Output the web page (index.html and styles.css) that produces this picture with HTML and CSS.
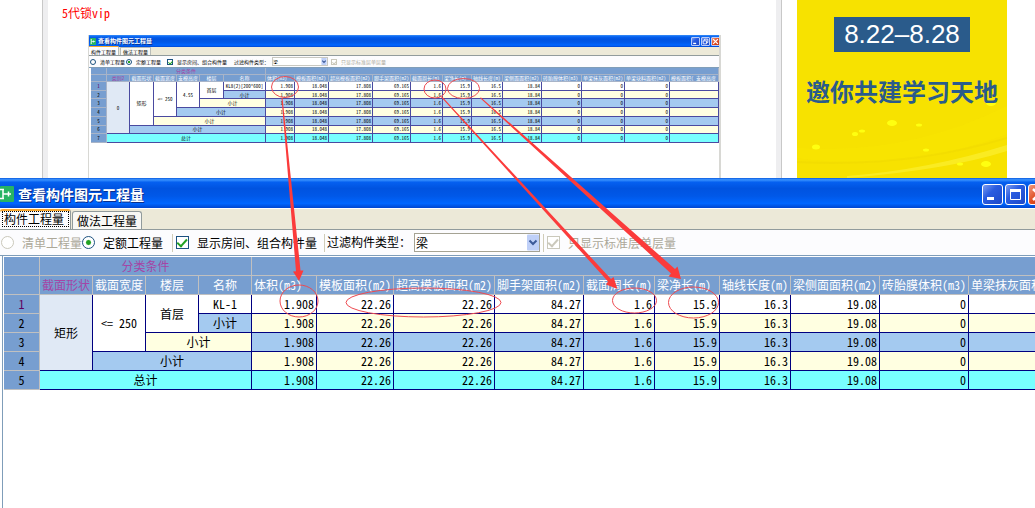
FILE: index.html
```html
<!DOCTYPE html>
<html lang="zh-CN">
<head>
<meta charset="utf-8">
<title>查看构件图元工程量</title>
<link rel="stylesheet" href="styles.css">
</head>
<body>
<div class="post">
  <div class="post-edge post-edge-left"></div>
  <main class="post-body">
    <p class="post-note">5代锁vip</p>
    <section class="win mini">
      <header class="titlebar">
        <svg class="app-icon" viewBox="0 0 14 16"><rect width="14" height="16" rx="1" fill="#27b463"/><path d="M3 3v10M3 8h9M8 5.500v5M1.500 4h3M1.500 12h3" stroke="#fff" stroke-width="1.600" fill="none"/></svg>
        <h2 class="title">查看构件图元工程量</h2>
        <button class="winbtn" aria-label="最小化"><svg viewBox="0 0 21 21"><path d="M5 15h7" stroke="#fff" stroke-width="3"/></svg></button>
        <button class="winbtn" aria-label="还原"><svg viewBox="0 0 21 21"><path d="M8 8V5h8v8h-3M5 9h8v7H5z" stroke="#fff" stroke-width="2" fill="none"/></svg></button>
        <button class="winbtn close" aria-label="关闭"><svg viewBox="0 0 21 21"><path d="M5 5l11 11M16 5L5 16" stroke="#fff" stroke-width="3"/></svg></button>
      </header>
      <nav class="tabs"><button class="tab active">构件工程量</button><button class="tab">做法工程量</button></nav>
      <div class="toolbar">
        <label class="opt opt-a"><input type="radio" name="m1">清单工程量</label>
        <label class="opt opt-b"><input type="radio" name="m1" checked>定额工程量</label>
        <label class="opt opt-c"><input type="checkbox" checked>显示房间、组合构件量</label>
        <label class="opt-label" for="type1">过滤构件类型：</label>
        <span class="pick"><select id="type1"><option>梁</option></select><svg class="arrow" viewBox="0 0 12 16"><rect width="12" height="16" rx="1" fill="#bfd0f8"/><path d="M2 6l4 4 4-4" stroke="#3c5a99" stroke-width="2.500" fill="none"/></svg></span>
        <label class="opt opt-d off"><input type="checkbox" checked disabled>只显示标准层单层量</label>
      </div>
      <div class="sheet">
        <table class="grid">
          <colgroup><col class="n16"><col class="n23"><col class="n24"><col class="n23"><col class="n23"><col class="n24"><col class="n42"><col class="n29"><col class="n34"><col class="n44"><col class="n38"><col class="n32"><col class="n29"><col class="n31"><col class="n39"><col class="n40"><col class="n43"><col class="n45"><col class="n49"></colgroup>
          <thead>
            <tr><th></th><th colspan="6" class="mid key">分类条件</th><th colspan="12"></th></tr>
            <tr><th></th><th class="mid key">类别2</th><th class="mid">截面形状</th><th class="mid">截面宽度</th><th class="mid">支模高度</th><th class="mid">楼层</th><th class="mid">名称</th><th>体积(m3)</th><th>模板面积(m2)</th><th>超高模板面积(m2)</th><th>脚手架面积(m2)</th><th>截面周长(m)</th><th>梁净长(m)</th><th>轴线长度(m)</th><th>梁侧面面积(m2)</th><th>砖胎膜体积(m3)</th><th>单梁抹灰面积(m2)</th><th>单梁块料面积(m2)</th><th>模板面积( 支模高度</th></tr>
          </thead>
          <tbody>
            <tr><th class="cur">1</th><td rowspan="6" class="mid pale">0</td><td rowspan="5" class="mid">矩形</td><td rowspan="4" class="mid">&lt;= 250</td><td rowspan="3" class="mid">4.55</td><td rowspan="2" class="mid">首层</td><td class="mid">KL8(2)[200*600]</td><td>1.908</td><td>18.048</td><td>17.808</td><td>69.165</td><td>1.6</td><td>15.9</td><td>16.5</td><td>18.84</td><td>0</td><td>0</td><td>0</td><td></td></tr>
            <tr class="cream"><th>2</th><td class="mid blue">小计</td><td>1.908</td><td>18.048</td><td>17.808</td><td>69.165</td><td>1.6</td><td>15.9</td><td>16.5</td><td>18.84</td><td>0</td><td>0</td><td>0</td><td></td></tr>
            <tr class="sky"><th>3</th><td colspan="2" class="mid ivory">小计</td><td>1.908</td><td>18.048</td><td>17.808</td><td>69.165</td><td>1.6</td><td>15.9</td><td>16.5</td><td>18.84</td><td>0</td><td>0</td><td>0</td><td></td></tr>
            <tr class="cream"><th>4</th><td colspan="3" class="mid blue">小计</td><td>1.908</td><td>18.048</td><td>17.808</td><td>69.165</td><td>1.6</td><td>15.9</td><td>16.5</td><td>18.84</td><td>0</td><td>0</td><td>0</td><td></td></tr>
            <tr class="sky"><th>5</th><td colspan="4" class="mid ivory">小计</td><td>1.908</td><td>18.048</td><td>17.808</td><td>69.165</td><td>1.6</td><td>15.9</td><td>16.5</td><td>18.84</td><td>0</td><td>0</td><td>0</td><td></td></tr>
            <tr class="cream"><th>6</th><td colspan="5" class="mid blue">小计</td><td>1.908</td><td>18.048</td><td>17.808</td><td>69.165</td><td>1.6</td><td>15.9</td><td>16.5</td><td>18.84</td><td>0</td><td>0</td><td>0</td><td></td></tr>
            <tr class="total"><th>7</th><td colspan="6" class="mid">总计</td><td>1.908</td><td>18.048</td><td>17.808</td><td>69.165</td><td>1.6</td><td>15.9</td><td>16.5</td><td>18.84</td><td>0</td><td>0</td><td>0</td><td></td></tr>
          </tbody>
        </table>
      </div>
    </section>
  </main>
  <div class="post-edge post-edge-right"></div>
  <aside class="banner">
    <svg class="banner-art" viewBox="0 0 210 178">
      <path d="M0 158Q110 172 210 134V106Q110 156 0 148Z" fill="#f9e800" opacity=".4"/>
      <path d="M50 178Q150 170 210 151V145Q130 170 50 176Z" fill="#fbf030" opacity=".7"/>
      <path d="M0 162Q110 168 210 138" stroke="#eed800" fill="none" stroke-width="2" opacity=".4"/>
      <g fill="#ffff10"><ellipse cx="95" cy="123" rx="5" ry="3"/><ellipse cx="122" cy="125" rx="3" ry="1.500"/><ellipse cx="58" cy="134" rx="3" ry="2"/><ellipse cx="65" cy="131" rx="3" ry="1.500"/><ellipse cx="19" cy="147" rx="4" ry="2.500"/><ellipse cx="129" cy="150" rx="3" ry="1.500"/><ellipse cx="163" cy="164" rx="3" ry="1.500"/><ellipse cx="189" cy="164" rx="5" ry="3"/><ellipse cx="194" cy="103" rx="5" ry="3"/></g>
    </svg>
    <p class="banner-date">8.22–8.28</p>
    <p class="banner-text">邀你共建学习天地</p>
  </aside>
</div>

<section class="win full">
  <header class="titlebar">
    <svg class="app-icon" viewBox="0 0 14 16"><rect width="14" height="16" rx="1" fill="#27b463"/><path d="M3 3.500v9M3 8h8M8.500 5.500v5M0 3.500h4M0 12.500h4" stroke="#fff" stroke-width="1.500" fill="none"/></svg>
    <h1 class="title">查看构件图元工程量</h1>
    <button class="winbtn" aria-label="最小化"><svg viewBox="0 0 21 21"><path d="M5 14.500h7" stroke="#fff" stroke-width="3"/></svg></button>
    <button class="winbtn" aria-label="最大化"><svg viewBox="0 0 21 21"><path d="M5.500 6v9.500h10V6M5 6.500h11" stroke="#fff" fill="none"/><path d="M5 6.500h11" stroke="#fff" stroke-width="3"/></svg></button>
    <button class="winbtn close" aria-label="关闭"><svg viewBox="0 0 21 21"><path d="M5 5l11 11M16 5L5 16" stroke="#fff" stroke-width="2.500"/></svg></button>
  </header>
  <nav class="tabs"><button class="tab active">构件工程量</button><button class="tab">做法工程量</button></nav>
  <div class="toolbar">
    <label class="opt opt-a off"><input type="radio" name="m2" disabled>清单工程量</label>
    <label class="opt opt-b"><input type="radio" name="m2" checked>定额工程量</label>
    <label class="opt opt-c"><input type="checkbox" checked>显示房间、组合构件量</label>
    <label class="opt-label" for="type2">过滤构件类型：</label>
    <span class="pick"><select id="type2"><option>梁</option></select><svg class="arrow" viewBox="0 0 12 16"><rect width="12" height="16" rx="1" fill="#bfd0f8"/><path d="M2.500 6L6 9.500 9.500 6" stroke="#3c5a99" stroke-width="2" fill="none"/></svg></span>
    <label class="opt opt-d off"><input type="checkbox" checked disabled>只显示标准层单层量</label>
  </div>
  <div class="sheet">
    <table class="grid">
      <colgroup><col class="w36"><col class="w53"><col class="w53"><col class="w53"><col class="w53"><col class="w65"><col class="w77"><col class="w101"><col class="w89"><col class="w71"><col class="w65"><col class="w71"><col class="w89"><col class="w89"><col class="w101"></colgroup>
      <thead>
        <tr><th></th><th colspan="4" class="mid key">分类条件</th><th colspan="10"></th></tr>
        <tr><th></th><th class="mid key">截面形状</th><th class="mid">截面宽度</th><th class="mid">楼层</th><th class="mid">名称</th><th>体积(m3)</th><th>模板面积(m2)</th><th>超高模板面积(m2)</th><th>脚手架面积(m2)</th><th>截面周长(m)</th><th>梁净长(m)</th><th>轴线长度(m)</th><th>梁侧面面积(m2)</th><th>砖胎膜体积(m3)</th><th>单梁抹灰面积</th></tr>
      </thead>
      <tbody>
        <tr><th class="cur">1</th><td rowspan="4" class="mid pale">矩形</td><td rowspan="3" class="mid">&lt;= 250</td><td rowspan="2" class="mid">首层</td><td class="mid">KL-1</td><td>1.908</td><td>22.26</td><td>22.26</td><td>84.27</td><td>1.6</td><td>15.9</td><td>16.3</td><td>19.08</td><td>0</td><td></td></tr>
        <tr class="cream"><th>2</th><td class="mid blue">小计</td><td>1.908</td><td>22.26</td><td>22.26</td><td>84.27</td><td>1.6</td><td>15.9</td><td>16.3</td><td>19.08</td><td>0</td><td></td></tr>
        <tr class="sky"><th>3</th><td colspan="2" class="mid ivory">小计</td><td>1.908</td><td>22.26</td><td>22.26</td><td>84.27</td><td>1.6</td><td>15.9</td><td>16.3</td><td>19.08</td><td>0</td><td></td></tr>
        <tr class="cream"><th>4</th><td colspan="3" class="mid blue">小计</td><td>1.908</td><td>22.26</td><td>22.26</td><td>84.27</td><td>1.6</td><td>15.9</td><td>16.3</td><td>19.08</td><td>0</td><td></td></tr>
        <tr class="total"><th>5</th><td colspan="4" class="mid">总计</td><td>1.908</td><td>22.26</td><td>22.26</td><td>84.27</td><td>1.6</td><td>15.9</td><td>16.3</td><td>19.08</td><td>0</td><td></td></tr>
      </tbody>
    </table>
  </div>
</section>

<svg class="marks" width="1035" height="508" viewBox="0 0 1035 508" aria-hidden="true">
  <g fill="none" stroke="#ee4a50">
    <ellipse cx="285" cy="87" rx="13.500" ry="10.500"/>
    <ellipse cx="435" cy="89" rx="11" ry="9"/>
    <ellipse cx="463.500" cy="88.500" rx="16" ry="10"/>
    <ellipse cx="299" cy="301" rx="19" ry="16"/>
    <ellipse cx="423.500" cy="302.500" rx="77.500" ry="14.500"/>
    <ellipse cx="634.500" cy="300.500" rx="22" ry="12.500"/>
    <ellipse cx="693.500" cy="302.500" rx="25" ry="15.500"/>
  </g>
  <g fill="#fb3b3b">
    <path d="M281.500 98L282.500 98L300.500 270.500L303.500 270.500L299 281L293 271.500L296 271.300Z"/>
    <path d="M441 97L442 96.500L611 279L613.500 277L617.500 289L606 284.500L608 281.500Z"/>
    <path d="M480 98L481 97.500L675 269L677.500 266.500L681 279L668.500 276.500L671 273.500Z"/>
  </g>
</svg>
</body>
</html>
```
FILE: styles.css
```css
* { box-sizing: border-box; }

body {
  margin: 0;
  min-height: 100vh;
  display: flex;
  flex-direction: column;
  position: relative;
  overflow: hidden;
  background: #fff;
  color: #000;
  font-family: "Noto Sans Mono CJK SC", "Noto Sans CJK SC", "Liberation Mono", monospace;
  font-size: 12px;
}

h1, h2, p { margin: 0; }
button, select, input { font: inherit; color: inherit; margin: 0; padding: 0; }

/* forum page behind the window */
.post { display: flex; height: 178px; overflow: hidden; }
.post-edge { flex: none; width: 6px; background: #eeeef0; }
.post-edge-left { margin-left: 42px; border-left: 1px solid #c8c8c8; }
.post-edge-right { border-right: 1px solid #c8c8c8; }
.post-body { flex: 1; min-width: 0; padding: 4px 55px 0 40px; }
.post-note { padding-left: 14px; height: 31px; line-height: 18px; color: #f00; margin-left: -40px; }

.banner {
  flex: none;
  width: 210px;
  margin: 0 28px 0 15px;
  padding-top: 17px;
  display: flex;
  flex-direction: column;
  align-items: center;
  position: relative;
  background: #f7e200;
  color: #2a5b8b;
}
.banner-art { position: absolute; inset: 0; }
.banner-date {
  position: relative;
  padding: 0 10px;
  margin-bottom: 21px;
  background: #2a5b8b;
  color: #fff;
  font: 26px/35px "Liberation Sans", Arial, sans-serif;
}
.banner-text {
  position: relative;
  font: bold 24px/36px "Noto Sans CJK SC", sans-serif;
  white-space: nowrap;
}

/* application window */
.win { background: #fff; overflow: hidden; }
.full { flex: 1; }
.titlebar {
  display: flex;
  align-items: center;
  gap: 2px;
  color: #fff;
  background: linear-gradient(#0a5be0 0, #3a93ff 6%, #0560f0 14%, #0053e0 35%, #0058e8 60%, #0066ff 85%, #0046d0 100%);
}
.full .titlebar { height: 31px; border-bottom: 1px solid #fff; margin-right: -14px; padding-top: 2px; }
.title { flex: 1; white-space: nowrap; text-shadow: 1px 1px #0a2f8c; font-family: "Noto Sans CJK SC", sans-serif; }
.full .title { font-size: 14px; line-height: 20px; padding-left: 2px; }
.app-icon { flex: none; width: 14px; height: 16px; }
.winbtn {
  width: 21px;
  height: 21px;
  border: 1px solid #fff;
  border-radius: 3px;
  background: linear-gradient(135deg, #7b9cf0, #2a5ce0 40%, #1c48c8);
}
.winbtn svg { display: block; width: 21px; height: 21px; margin: -1px; }
.winbtn.close { background: linear-gradient(135deg, #f09a80, #df4a20 50%, #c83a14); }

.tabs {
  display: flex;
  align-items: flex-end;
  gap: 1px;
  height: 21px;
  background: #ece9d8;
  border-bottom: 1px solid #919b9c;
}
.tab {
  height: 18px;
  padding: 0 4px;
  line-height: 16px;
  white-space: nowrap;
  background: #f8f8f4;
  border: 1px solid #919b9c;
  border-bottom: 0;
  border-radius: 3px 3px 0 0;
}
.tab.active {
  height: 20px;
  padding: 0 6px 3px 4px;
  border-left: 0;
  border-top: 2px solid #f8a932;
  background: #fcfcfe;
  outline: 1px dotted #000;
  outline-offset: -3px;
}

.toolbar {
  display: flex;
  align-items: center;
  height: 26px;
  background: #fcfcfe;
  border-bottom: 1px solid #7f9db9;
  white-space: nowrap;
}
.opt { display: flex; align-items: center; gap: 8px; }
.off { color: #aca899; }
.full .opt-a { padding-left: 1px; width: 82px; }
.full .opt-b { width: 90px; }
.full .opt-c { width: 152px; height: 18px; border-left: 1px solid #d0ccb8; padding-left: 3px; }
.full .opt-label { height: 18px; line-height: 16px; border-left: 1px solid #d0ccb8; padding-left: 2px; width: 90px; }
.full .opt-d { height: 18px; margin-left: 3px; border-left: 1px solid #d0ccb8; padding-left: 3px; }
.opt input {
  appearance: none;
  flex: none;
  width: 13px;
  height: 13px;
  border: 1px solid #1c5180;
  background: #fff;
}
.opt input[type="radio"] { border-radius: 50%; }
.opt input[type="radio"]:checked { background: radial-gradient(circle, #21a121 0 25%, #fff 40%); }
.opt input[type="checkbox"]:checked::after {
  content: "";
  display: block;
  width: 40%;
  height: 75%;
  margin: 0 auto;
  border: solid #21a121;
  border-width: 0 2px 2px 0;
  transform: rotate(42deg);
}
.opt.off input { border-color: #cac8bb; }
.opt.off input[type="checkbox"]:checked::after { border-color: #cac8bb; }

.pick { position: relative; display: flex; width: 126px; height: 19px; }
.pick select {
  appearance: none;
  width: 100%;
  padding: 0 0 2px 1px;
  border: 1px solid #a5a394;
  border-radius: 0;
  background: #fff;
}
.arrow { position: absolute; right: 1px; top: 1px; width: 12px; height: 17px; }

.sheet { background: #fff; }
.full .sheet { margin-left: 2px; border-left: 1px solid #7f9db9; padding: 1px 0 0 1px; min-height: 252px; }
.grid { table-layout: fixed; border-spacing: 0; width: 0; }
.grid th, .grid td {
  padding: 0 2px;
  border: solid #000080;
  border-width: 0 1px 1px 0;
  text-align: right;
  font-weight: normal;
  white-space: nowrap;
  overflow: hidden;
}
.full .grid th, .full .grid td { height: 19px; line-height: 18px; }
.grid th { background: #779ed0; border-color: #c0c0c0; }
.grid thead th { color: #fff; text-align: left; }
.grid tbody th { text-align: center; }
.grid .mid { text-align: center; padding: 0; }
.grid thead .key { color: #a545a5; }
.grid .cur { color: #600060; }
.cream td, .grid .ivory { background: #ffffe1; }
.sky td, .grid .blue { background: #a4caf0; }
.total td { background: #78ffff; }
.grid .pale { background: #e0e9f5; }

.w36 { width: 36px; }
.w53 { width: 53px; }
.w65 { width: 65px; }
.w71 { width: 71px; }
.w77 { width: 77px; }
.w89 { width: 89px; }
.w101 { width: 101px; }

/* reduced copy of the window inside the post */
.mini { width: 633px; height: 150px; font-size: 5px; border: solid #d8d8d4; border-width: 0 2px 0 1px; }
.mini .titlebar { height: 12px; gap: 1px; padding: 0 0 0 1px; margin-right: -1px; }
.mini .app-icon { width: 6px; height: 7px; }
.mini .title { font-size: 6px; line-height: 10px; padding-left: 1px; }
.mini .winbtn { width: 9px; height: 9px; border-radius: 1px; border-color: #b8ccf8; }
.mini .winbtn svg { width: 9px; height: 9px; }
.mini .tabs { height: 9px; }
.mini .tab { height: 8px; line-height: 7px; padding: 0 2px; border-radius: 1px 1px 0 0; border-color: #b8bcb8; }
.mini .tab.active { height: 9px; border-top: 1px solid #f8a932; padding: 0 2px; outline: 0; }
.mini .toolbar { height: 12px; }
.mini .opt { gap: 4px; }
.mini .opt input { width: 6px; height: 6px; }
.mini .opt input[type="checkbox"]:checked::after { border-width: 0 1px 1px 0; }
.mini .opt-a { width: 37px; padding-left: 1px; }
.mini .opt-b { width: 41px; }
.mini .opt-c { width: 67px; }
.mini .opt-label { width: 38px; }
.mini .pick { width: 56px; height: 9px; }
.mini .pick select { padding: 0 0 1px; border-color: #c8c8c0; }
.mini .arrow { width: 6px; height: 7px; }
.mini .opt-d { padding-left: 3px; }
.mini .sheet { padding-left: 2px; }
.mini .grid { height: 75px; }
.mini .grid th, .mini .grid td { line-height: 6px; padding: 0 1px; }
.mini .grid td { border-color: #4a4aa0; }
.mini .grid th { border-color: #a8b4c8; }
.mini .grid .mid { padding: 0; }

.n16 { width: 16px; }
.n23 { width: 23px; }
.n24 { width: 24px; }
.n29 { width: 29px; }
.n31 { width: 31px; }
.n32 { width: 32px; }
.n34 { width: 34px; }
.n38 { width: 38px; }
.n39 { width: 39px; }
.n40 { width: 40px; }
.n42 { width: 42px; }
.n43 { width: 43px; }
.n44 { width: 44px; }
.n45 { width: 45px; }
.n49 { width: 49px; }

/* hand-drawn rings and arrows over both windows */
.marks { position: absolute; left: 0; top: 0; pointer-events: none; }
```
